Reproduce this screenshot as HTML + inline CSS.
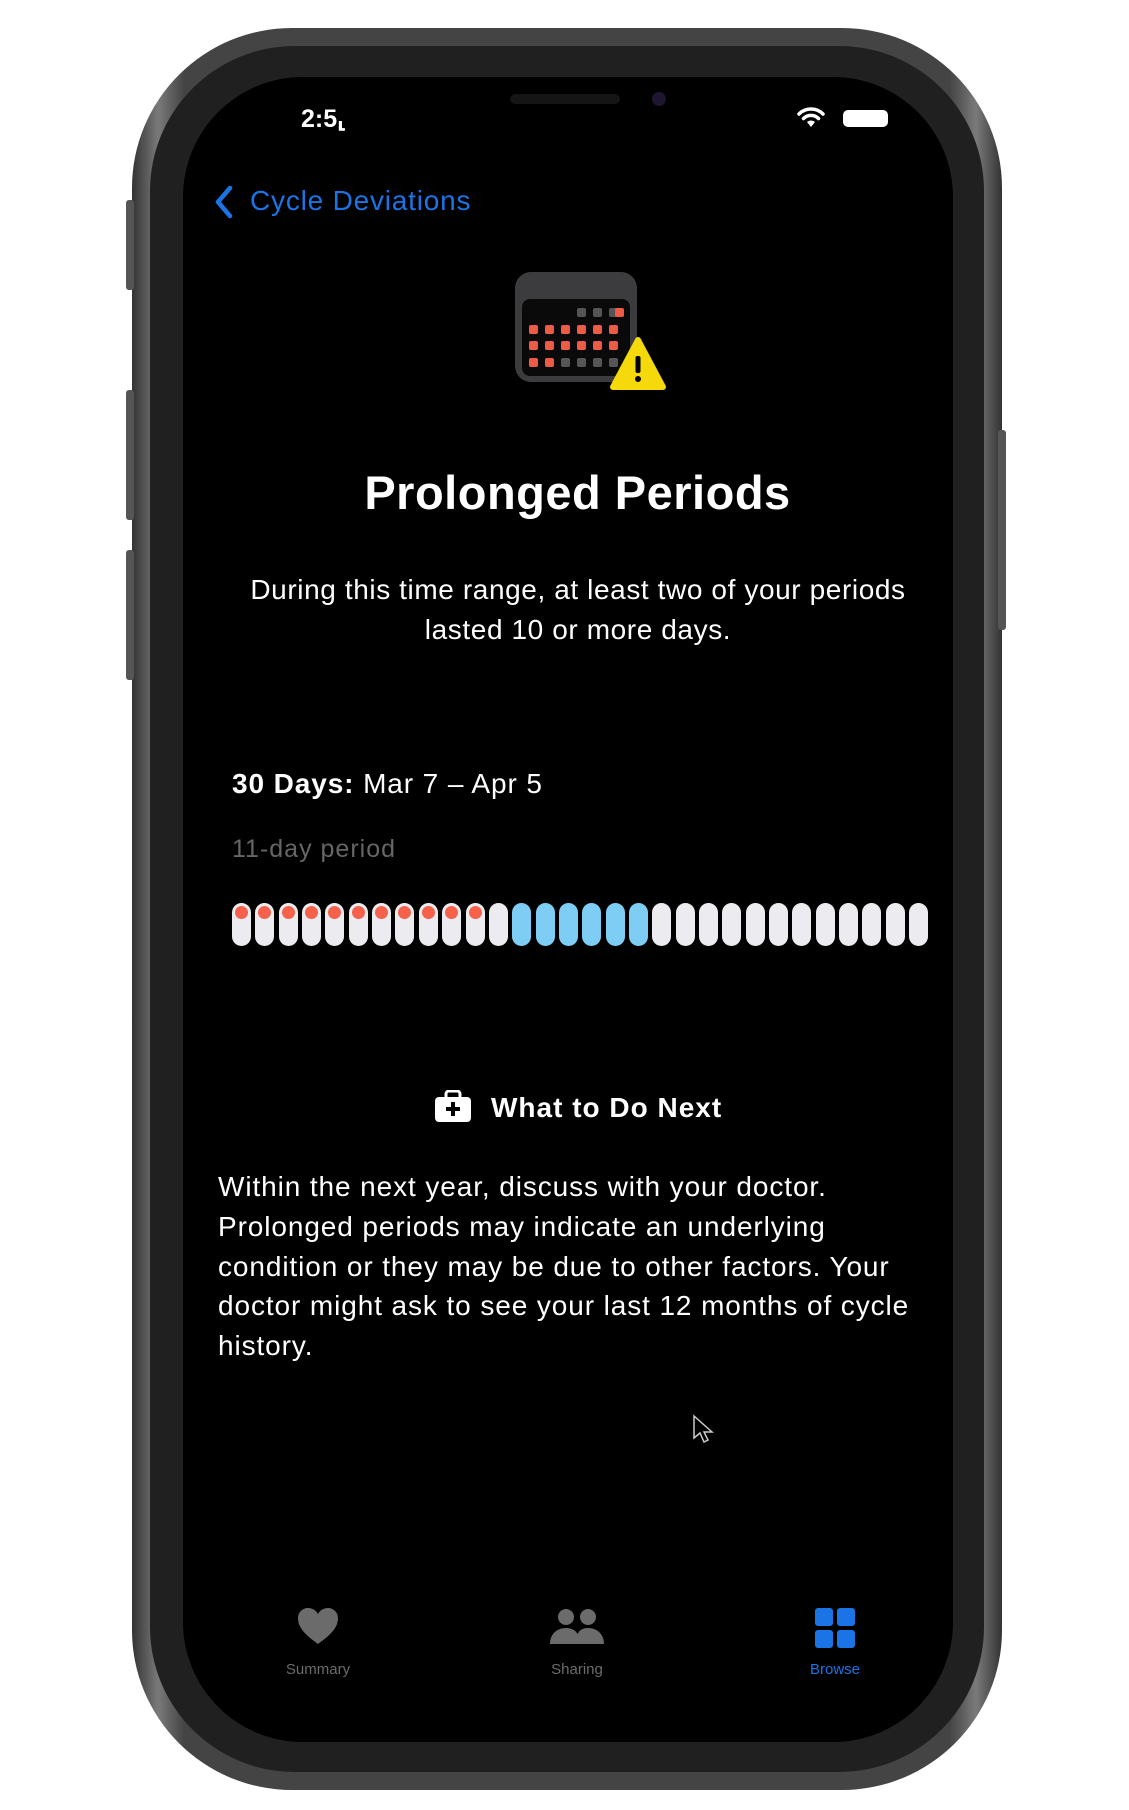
<!DOCTYPE html>
<html><head><meta charset="utf-8"><style>
*{margin:0;padding:0;box-sizing:border-box}
body{width:1129px;height:1810px;background:#fff;position:relative;overflow:hidden;font-family:"Liberation Sans",sans-serif}
.a{position:absolute}
.outer{left:132px;top:28px;width:870px;height:1762px;border-radius:160px;background:linear-gradient(90deg,#333,#7a7a7a 3%,#444 6%,#444 94%,#7a7a7a 97%,#333);}
.mid{left:150px;top:46px;width:834px;height:1726px;border-radius:145px;background:#202020}
.screen{left:183px;top:77px;width:770px;height:1665px;border-radius:120px;background:#000}
.t{color:#fff;white-space:nowrap}
.pill{position:absolute;top:903px;width:19px;height:43px;border-radius:10px;background:#ececf0}
</style></head><body>
<div class="a outer"></div>
<div class="a mid"></div>
<div class="a screen"></div>
<div class="a" style="left:126px;top:200px;width:8px;height:90px;background:#555;border-radius:3px"></div>
<div class="a" style="left:126px;top:390px;width:8px;height:130px;background:#555;border-radius:3px"></div>
<div class="a" style="left:126px;top:550px;width:8px;height:130px;background:#555;border-radius:3px"></div>
<div class="a" style="left:998px;top:430px;width:8px;height:200px;background:#555;border-radius:3px"></div>
<div class="a" style="left:510px;top:94px;width:110px;height:10px;border-radius:5px;background:#151515"></div>
<div class="a" style="left:652px;top:92px;width:14px;height:14px;border-radius:7px;background:#1e1530"></div>

<div class="a t" style="left:301px;top:104px;font-size:25px;font-weight:bold">2:5&#x2E24;</div>
<svg class="a" style="left:796px;top:106px" width="30" height="22" viewBox="0 0 30 22"><path d="M3 8a17 17 0 0 1 24 0M7.5 12.5a10.5 10.5 0 0 1 15 0" stroke="#fff" stroke-width="3.5" fill="none" stroke-linecap="round"/><path d="M11 16l4 5 4-5a6 6 0 0 0-8 0z" fill="#fff"/></svg>
<div class="a" style="left:843px;top:110px;width:45px;height:17px;border-radius:5px;background:#fff"></div>

<svg class="a" style="left:212px;top:184px" width="24" height="36" viewBox="0 0 24 36"><path d="M18 4L6 18l12 14" stroke="#1a74e6" stroke-width="4.5" fill="none" stroke-linecap="round" stroke-linejoin="round"/></svg>
<div class="a t" style="left:250px;top:185px;font-size:28px;letter-spacing:0.8px;color:#1a74e6">Cycle Deviations</div>

<svg class="a" style="left:515px;top:272px" width="152" height="120" viewBox="0 0 152 120">
<rect x="0" y="0" width="122" height="110" rx="16" fill="#3c3c3e"/>
<rect x="7" y="27" width="108" height="77" rx="8" fill="#0a0a0a"/>
<g fill="#555">
<rect x="62" y="36" width="9" height="9" rx="2"/><rect x="78" y="36" width="9" height="9" rx="2"/><rect x="94" y="36" width="9" height="9" rx="2"/>
<rect x="46" y="86" width="9" height="9" rx="2"/><rect x="62" y="86" width="9" height="9" rx="2"/><rect x="78" y="86" width="9" height="9" rx="2"/><rect x="94" y="86" width="9" height="9" rx="2"/>
</g>
<g fill="#ef5a47">
<rect x="100" y="36" width="9" height="9" rx="2"/>
<rect x="14" y="53" width="9" height="9" rx="2"/><rect x="30" y="53" width="9" height="9" rx="2"/><rect x="46" y="53" width="9" height="9" rx="2"/><rect x="62" y="53" width="9" height="9" rx="2"/><rect x="78" y="53" width="9" height="9" rx="2"/><rect x="94" y="53" width="9" height="9" rx="2"/>
<rect x="14" y="69" width="9" height="9" rx="2"/><rect x="30" y="69" width="9" height="9" rx="2"/><rect x="46" y="69" width="9" height="9" rx="2"/><rect x="62" y="69" width="9" height="9" rx="2"/><rect x="78" y="69" width="9" height="9" rx="2"/><rect x="94" y="69" width="9" height="9" rx="2"/>
<rect x="14" y="86" width="9" height="9" rx="2"/><rect x="30" y="86" width="9" height="9" rx="2"/>
</g>
<path d="M123 68L98 115h50z" fill="#f5d90a" stroke="#f5d90a" stroke-width="6" stroke-linejoin="round"/>
<rect x="120.5" y="84" width="5" height="17" rx="2" fill="#000"/><circle cx="123" cy="107" r="3" fill="#000"/>
</svg>

<div class="a t" style="left:0;width:1155px;text-align:center;top:465px;font-size:47px;letter-spacing:0.5px;font-weight:bold">Prolonged Periods</div>
<div class="a t" style="left:222px;width:712px;text-align:center;top:570px;font-size:28px;letter-spacing:0.6px;line-height:40px;white-space:normal">During this time range, at least two of your periods lasted 10 or more days.</div>

<div class="a t" style="left:232px;top:768px;font-size:28px;letter-spacing:0.9px"><b>30 Days:</b> Mar 7 – Apr 5</div>
<div class="a t" style="left:232px;top:835px;font-size:25px;letter-spacing:1px;color:#666">11-day period</div>

<div id="pills"></div>
<script>
var h='';for(var i=0;i<30;i++){var x=232+i*23.35;var c=(i>=12&&i<18)?'#7dcdf5':'#ececf0';h+='<div class="pill" style="left:'+x+'px;background:'+c+'">'+(i<11?'<div style="width:13px;height:13px;border-radius:7px;background:#f5614a;margin:3px auto 0"></div>':'')+'</div>';}
document.getElementById('pills').innerHTML=h;
</script>

<svg class="a" style="left:434px;top:1090px" width="38" height="33" viewBox="0 0 38 33"><rect x="12" y="1" width="14" height="9" rx="3" fill="none" stroke="#fff" stroke-width="3"/><rect x="1" y="7" width="36" height="25" rx="4" fill="#fff"/><path d="M19 12v14M12 19h14" stroke="#000" stroke-width="4"/></svg>
<div class="a t" style="left:491px;top:1092px;font-size:28px;letter-spacing:1px;font-weight:bold">What to Do Next</div>

<div class="a t" style="left:218px;width:735px;top:1167px;font-size:28px;letter-spacing:0.9px;line-height:39.8px;white-space:normal">Within the next year, discuss with your doctor. Prolonged periods may indicate an underlying condition or they may be due to other factors. Your doctor might ask to see your last 12 months of cycle history.</div>

<svg class="a" style="left:692px;top:1414px" width="22" height="30" viewBox="0 0 22 30"><path d="M2 2v22l6-5 4 9 4-2-4-8h8z" fill="#000" stroke="#ccc" stroke-width="1.5"/></svg>

<svg class="a" style="left:296px;top:1606px" width="44" height="40" viewBox="0 0 44 40"><path d="M22 38C8 28 2 21 2 12 2 6 7 2 12 2c4 0 8 2 10 6 2-4 6-6 10-6 5 0 10 4 10 10 0 9-6 16-20 26z" fill="#6b6b6b"/></svg>
<div class="a t" style="left:268px;width:100px;text-align:center;top:1661px;font-size:15px;color:#6b6b6b">Summary</div>
<svg class="a" style="left:548px;top:1608px" width="58" height="38" viewBox="0 0 58 38"><circle cx="18" cy="9" r="8" fill="#6b6b6b"/><circle cx="40" cy="9" r="8" fill="#6b6b6b"/><path d="M2 36c0-10 7-16 16-16s14 6 14 16zM28 36c0-10 3-16 12-16s16 6 16 16z" fill="#6b6b6b"/></svg>
<div class="a t" style="left:527px;width:100px;text-align:center;top:1661px;font-size:15px;color:#6b6b6b">Sharing</div>
<svg class="a" style="left:815px;top:1608px" width="40" height="40" viewBox="0 0 40 40"><g fill="#1a74e6"><rect x="0" y="0" width="18" height="18" rx="3"/><rect x="22" y="0" width="18" height="18" rx="3"/><rect x="0" y="22" width="18" height="18" rx="3"/><rect x="22" y="22" width="18" height="18" rx="3"/></g></svg>
<div class="a t" style="left:785px;width:100px;text-align:center;top:1661px;font-size:15px;color:#1a74e6">Browse</div>
</body></html>
